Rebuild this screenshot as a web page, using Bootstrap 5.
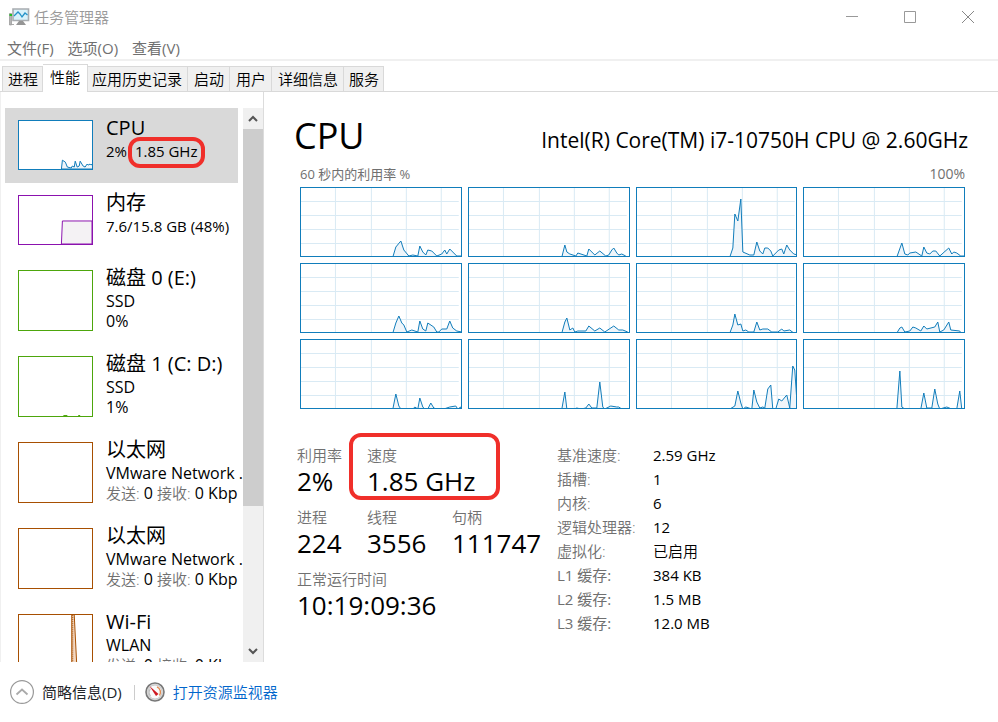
<!DOCTYPE html>
<html lang="zh-CN">
<head>
<meta charset="utf-8">
<meta name="viewport" content="width=device-width, initial-scale=1">
<title>任务管理器</title>
<link href="https://cdn.jsdelivr.net/npm/bootstrap@5.3.0/dist/css/bootstrap.min.css" rel="stylesheet">
<style>
  :root { --cpu: #117dbb; --mem: #8b12ae; --disk: #4da60c; --net: #a74f01; --dim: #707070; --mark: #f02f2a; }
  body { font-family: "Open Sans", "Noto Sans CJK SC", sans-serif; font-size: 15px; line-height: 20px; color: #000; background: #fff; }
  button { color: inherit; }
  .cjk { font-size: 15px; font-weight: 350; }
  .mix { font-size: 15px; font-weight: 400; }
  .dim { color: var(--dim); }
  .titlebar { height: 34px; padding: 0 1px 0 9px; color: #999; }
  .win-btn { width: 58px; height: 34px; }
  .menubar { height: 27px; padding: 3px 7px 0; gap: 14px; border-bottom: 2px solid #f0f0f0; }
  .tabstrip { height: 31px; padding-left: 2px; border-bottom: 1px solid #d9d9d9; }
  .tabstrip .nav-link { height: 25px; padding: 0 5px 1px 6px; border: 1px solid #d9d9d9; border-bottom: 0; border-left-width: 0; border-radius: 0; background: #f0f0f0; color: #000; line-height: 20px; white-space: nowrap; }
  .tabstrip li:first-child .nav-link { border-left-width: 1px; padding: 0 4px 1px 5px; }
  .tabstrip .nav-link.wide { padding: 0 5px 1px 4px; }
  .tabstrip .nav-link.active { height: 28px; padding: 0 7px 3px; margin-bottom: -1px; background: #fff; position: relative; }
  .tabstrip li:last-child .nav-link { padding: 0 4px 1px 5px; }
  .workspace { min-height: 0; border-left: 1px solid #f0f0f0; }
  .side { width: 263px; padding: 16px 0 0 4px; border-right: 1px solid #dcdcdc; }
  .side-list { width: 238px; overflow: hidden; }
  .perf { width: 233px; padding: 8px 0 0 13px; gap: 13px; height: 75px; border: 0; background: #fff; color: #000; white-space: nowrap; text-align: left; overflow: visible; }
  .perf.tall { height: 86px; font-size: 16px; }
  .perf.on { background: #d9d9d9; }
  .perf .thumb { width: 75px; height: 50px; margin-top: 4px; border: 1px solid currentColor; background: #fff; }
  .perf.tall .thumb { height: 61px; }
  .perf .name { font-size: 20px; line-height: 24px; }
  .perf .row-a { line-height: 22px; }
  .perf .row-b { line-height: 18px; }
  .perf .row-b .cjk { line-height: 14px; }
  .c-cpu { color: var(--cpu); } .c-mem { color: var(--mem); } .c-disk { color: var(--disk); } .c-net { color: var(--net); }
  .ring { position: absolute; border: 4px solid var(--mark); border-radius: 12px; pointer-events: none; }
  .ring-small { inset: -4px -8px -7px -7px; }
  .ring-large { inset: -12px -25px -3px -18px; }
  .scroller { width: 20px; background: #f0f0f0; }
  .scroller button { height: 21px; }
  .scroller .thumb-bar { height: 377px; background: #cdcdcd; }
  .detail { padding: 8px 33px 0 36px; }
  .detail h1 { font-size: 36px; line-height: 40px; font-weight: 400; margin: 0 0 0 -6px; }
  .detail .model { font-size: 21px; line-height: 30px; margin-right: -3px; }
  .axis { font-size: 13px; line-height: 20px; margin-bottom: 3px; }
  .axis .pct { font-size: 14px; }
  .cores { display: grid; grid-template-columns: repeat(4, 1fr); gap: 6px; }
  .cores svg { width: 100%; height: 70px; border: 1px solid var(--cpu); display: block; }
  .plot { fill: #eff5fa; stroke: var(--cpu); stroke-width: 1; vector-effect: non-scaling-stroke; }
  .gridline { stroke: #d9eaf4; stroke-width: 1; fill: none; shape-rendering: crispEdges; }
  .figures { margin: 36px 0 0 -3px; gap: 16px; }
  .facts { display: grid; grid-template-columns: 70px 85px 89px; row-gap: 10px; align-content: start; white-space: nowrap; }
  .facts .cjk { line-height: 20px; }
  .facts .big { font-size: 26px; line-height: 32px; }
  .specs { display: grid; grid-template-columns: 96px auto; grid-auto-rows: 24px; line-height: 20px; white-space: nowrap; }
  .bottom { height: 60px; padding-left: 10px; }
  .bottom a { color: #0066cc; }
  .vsep { width: 1px; height: 15px; background: #ccc; margin: 0 10px 0 12px; }
</style>
<script src="https://cdn.jsdelivr.net/npm/bootstrap@5.3.0/dist/js/bootstrap.bundle.min.js"></script>
</head>
<body>
<svg width="0" height="0" class="position-absolute" aria-hidden="true">
  <symbol id="grid" viewBox="0 0 160 68" preserveAspectRatio="none"><path class="gridline" d="M34.5 0V68M70.5 0V68M105.500 0V68M140.500 0V68M0 13.500H158M0 27.500H158M0 41.500H158M0 55.500H158"/></symbol>
</svg>
<div class="vh-100 d-flex flex-column overflow-hidden">
  <header class="titlebar d-flex align-items-center flex-shrink-0">
    <svg width="21" height="18" viewBox="0 0 21 18" aria-hidden="true">
      <path d="M.5 5.500h2v11.500h-2z" fill="#b5b5b5" stroke="#888" stroke-width=".6"/><path d="M.5 6h2.500v2H.5z" fill="#20c020"/>
      <path d="M4 1h15.500v11.500H4z" fill="#d8f2fb" stroke="#a8acb0" stroke-width="1.600"/>
      <path d="M5 8l2-2 2-2 2 2 2 3 3-4 2.500 2" fill="none" stroke="#2492c8" stroke-width="1.300"/>
      <path d="M10 13h4l3 4H7z" fill="#959595"/><path d="M3 16.500h2" stroke="#aaa"/>
    </svg>
    <span class="cjk ms-1">任务管理器</span>
    <div class="ms-auto d-flex">
      <button class="win-btn btn p-0 border-0 rounded-0 d-flex align-items-center justify-content-center" aria-label="最小化"><svg width="12" height="12"><path d="M0 5.500h12" stroke="#999"/></svg></button>
      <button class="win-btn btn p-0 border-0 rounded-0 d-flex align-items-center justify-content-center" aria-label="最大化"><svg width="12" height="12"><path d="M.5.5h11v11H.5z" fill="none" stroke="#999"/></svg></button>
      <button class="win-btn btn p-0 border-0 rounded-0 d-flex align-items-center justify-content-center" aria-label="关闭"><svg width="12" height="12"><path d="M0 0l12 12M12 0L0 12" stroke="#888"/></svg></button>
    </div>
  </header>
  <nav class="menubar d-flex align-items-center flex-shrink-0">
    <button class="btn p-0 border-0 mix lh-1 dim">文件(F)</button>
    <button class="btn p-0 border-0 mix lh-1 dim">选项(O)</button>
    <button class="btn p-0 border-0 mix lh-1 dim">查看(V)</button>
  </nav>
  <ul class="tabstrip nav flex-nowrap align-items-end flex-shrink-0 cjk" role="tablist">
    <li><button class="nav-link" role="tab">进程</button></li>
    <li><button class="nav-link active" role="tab" aria-selected="true">性能</button></li>
    <li><button class="nav-link wide" role="tab">应用历史记录</button></li>
    <li><button class="nav-link" role="tab">启动</button></li>
    <li><button class="nav-link" role="tab">用户</button></li>
    <li><button class="nav-link" role="tab">详细信息</button></li>
    <li><button class="nav-link" role="tab">服务</button></li>
  </ul>
  <main class="workspace d-flex flex-grow-1">
    <aside class="side d-flex flex-shrink-0">
      <div class="side-list">
        <button class="perf on d-flex">
          <svg class="thumb c-cpu flex-shrink-0" viewBox="0 0 74 49" preserveAspectRatio="none"><path class="plot" d="M43 49l1-9 3 2 2 5 4 1 1-2 2 1 1-6 2 6 2-1 1-5 3 5 2 1 2-3 1 1 2-1 1 1 2-2 1 1v5z"/></svg>
          <span><span class="name d-block">CPU</span><span class="row-a d-block">2% <span class="position-relative ms-1">1.85 GHz<span class="ring ring-small"></span></span></span></span>
        </button>
        <button class="perf d-flex">
          <svg class="thumb c-mem flex-shrink-0" viewBox="0 0 74 49" preserveAspectRatio="none"><path d="M43 49l1-23.500h30V49z" fill="#f4f2f4" stroke="#8b12ae"/></svg>
          <span><span class="name d-block">内存</span><span class="row-a d-block">7.6/15.8 GB (48%)</span></span>
        </button>
        <button class="perf tall d-flex">
          <svg class="thumb c-disk flex-shrink-0"></svg>
          <span><span class="name d-block">磁盘 0 (E:)</span><span class="row-a d-block">SSD</span><span class="row-b d-block">0%</span></span>
        </button>
        <button class="perf tall d-flex">
          <svg class="thumb c-disk flex-shrink-0" viewBox="0 0 74 60" preserveAspectRatio="none"><path d="M45 59.500h4M60 59.500h2" stroke="#4da60c"/></svg>
          <span><span class="name d-block">磁盘 1 (C: D:)</span><span class="row-a d-block">SSD</span><span class="row-b d-block">1%</span></span>
        </button>
        <button class="perf tall d-flex">
          <svg class="thumb c-net flex-shrink-0"></svg>
          <span><span class="name d-block">以太网</span><span class="row-a d-block">VMware Network .</span><span class="row-b d-block"><span class="cjk dim">发送:</span> 0 <span class="cjk dim">接收:</span> 0 Kbp</span></span>
        </button>
        <button class="perf tall d-flex">
          <svg class="thumb c-net flex-shrink-0"></svg>
          <span><span class="name d-block">以太网</span><span class="row-a d-block">VMware Network .</span><span class="row-b d-block"><span class="cjk dim">发送:</span> 0 <span class="cjk dim">接收:</span> 0 Kbp</span></span>
        </button>
        <button class="perf tall d-flex">
          <svg class="thumb c-net flex-shrink-0" viewBox="0 0 74 60" preserveAspectRatio="none"><path d="M53 60V0h3l3 60z" fill="#f3d9c4"/><path d="M53.500 0V60M56 0l3 60" stroke="#a74f01" fill="none"/><path d="M54.500 0V60" stroke="#a74f01" stroke-dasharray="1 1"/></svg>
          <span><span class="name d-block">Wi-Fi</span><span class="row-a d-block">WLAN</span><span class="row-b d-block"><span class="cjk dim">发送:</span> 0 <span class="cjk dim">接收:</span> 0 Kbp</span></span>
        </button>
      </div>
      <div class="scroller d-flex flex-column">
        <button class="btn p-0 border-0 d-flex align-items-center justify-content-center" aria-label="向上滚动"><svg width="10" height="7"><path d="M1 6l4-4 4 4" fill="none" stroke="#555" stroke-width="2"/></svg></button>
        <div class="thumb-bar"></div>
        <button class="btn p-0 border-0 mt-auto d-flex align-items-center justify-content-center" aria-label="向下滚动"><svg width="10" height="7"><path d="M1 1l4 4 4-4" fill="none" stroke="#555" stroke-width="2"/></svg></button>
      </div>
    </aside>
    <section class="detail flex-grow-1">
      <div class="d-flex justify-content-between align-items-center pt-3">
        <h1>CPU</h1>
        <div class="model pt-2">Intel(R) Core(TM) i7-10750H CPU @ 2.60GHz</div>
      </div>
      <div class="axis dim d-flex justify-content-between pt-2"><span>60 秒内的利用率 %</span><span class="pct">100%</span></div>
      <div class="cores">
        <svg viewBox="0 0 160 68" preserveAspectRatio="none"><use href="#grid"/><path class="plot" d="M92 69L95 59 100 53 103 62 108 68 112 67 117 68 119 58 122 64 125 67 127 62 131 63 136 68 141 66 144 62 146 66 149 61 153 65 156 68 161 68V70H92z"/></svg>
        <svg viewBox="0 0 160 68" preserveAspectRatio="none"><use href="#grid"/><path class="plot" d="M93 69L96 57 98 64 101 66 107 68 109 65 118 68 120 61 126 67 131 63 137 68 140 67 143 62 145 60 148 65 150 67 153 66 157 68V70H93z"/></svg>
        <svg viewBox="0 0 160 68" preserveAspectRatio="none"><use href="#grid"/><path class="plot" d="M93 69L96 60 98 26 101 33 104 11 106 64 113 67 117 67 120 54 123 63 126 66 128 60 131 60 134 63 136 68 142 62 145 61 147 66 150 57 153 62 157 66 161 67V70H93z"/></svg>
        <svg viewBox="0 0 160 68" preserveAspectRatio="none"><use href="#grid"/><path class="plot" d="M93 69L98 55 101 66 104 67 106 65 112 64 118 68 120 59 123 65 126 66 129 63 132 63 136 68 145 60 148 66 150 64 153 65 157 68 161 68V70H93z"/></svg>
        <svg viewBox="0 0 160 68" preserveAspectRatio="none"><use href="#grid"/><path class="plot" d="M92 69L95 59 98 52 101 59 103 61 106 68 111 66 117 68 119 57 122 65 125 67 127 59 133 63 136 68 138 68 141 65 146 65 149 57 152 64 156 67 161 68V70H92z"/></svg>
        <svg viewBox="0 0 160 68" preserveAspectRatio="none"><use href="#grid"/><path class="plot" d="M93 69L96 58 98 54 101 66 104 64 106 68 109 67 117 67 120 62 126 67 131 64 136 68 145 62 150 66 154 66 159 68V70H93z"/></svg>
        <svg viewBox="0 0 160 68" preserveAspectRatio="none"><use href="#grid"/><path class="plot" d="M93 69L96 61 98 50 101 61 104 60 106 67 109 66 112 68 117 68 120 58 123 66 126 65 131 65 135 68 141 68 145 65 147 67 153 66 157 69V70H93z"/></svg>
        <svg viewBox="0 0 160 68" preserveAspectRatio="none"><use href="#grid"/><path class="plot" d="M93 69L96 64 98 63 101 68 106 67 109 63 112 64 117 67 120 62 123 65 131 63 134 58 136 68 140 66 145 58 147 66 156 67 157 69V70H93z"/></svg>
        <svg viewBox="0 0 160 68" preserveAspectRatio="none"><use href="#grid"/><path class="plot" d="M92 69L95 54 98 66 100 69 112 69 114 67 117 69 119 58 122 67 124 69 127 69 130 63 133 68 136 69 143 69 149 67 155 66 157 69 160 67V70H92z"/></svg>
        <svg viewBox="0 0 160 68" preserveAspectRatio="none"><use href="#grid"/><path class="plot" d="M93 69L96 52 98 69 105 69 108 68 112 69 117 68 120 64 123 68 128 68 131 42 134 67 136 69 142 66 148 67 150 67 153 69 160 69V70H93z"/></svg>
        <svg viewBox="0 0 160 68" preserveAspectRatio="none"><use href="#grid"/><path class="plot" d="M93 69L98 66 101 51 104 63 106 69 109 67 115 69 117 50 120 62 123 68 126 67 128 68 131 49 134 45 136 69 139 69 142 59 145 61 150 55 153 68 156 26 158 30 160 59V70H93z"/></svg>
        <svg viewBox="0 0 160 68" preserveAspectRatio="none"><use href="#grid"/><path class="plot" d="M93 69L96 31 98 67 101 69 117 69 120 53 123 68 128 68 131 49 134 64 136 69 143 67 148 69 153 69 156 51 158 69V70H93z"/></svg>
      </div>
      <div class="figures d-flex">
        <div class="facts">
          <div><div class="cjk dim">利用率</div><div class="big">2%</div></div>
          <div style="grid-column: span 2"><div class="position-relative d-inline-block align-top"><div class="cjk dim">速度</div><div class="big">1.85 GHz</div><span class="ring ring-large"></span></div></div>
          <div><div class="cjk dim">进程</div><div class="big">224</div></div>
          <div><div class="cjk dim">线程</div><div class="big">3556</div></div>
          <div><div class="cjk dim">句柄</div><div class="big">111747</div></div>
          <div style="grid-column: span 3"><div class="cjk dim">正常运行时间</div><div class="big">10:19:09:36</div></div>
        </div>
        <dl class="specs mb-0">
          <dt class="cjk dim">基准速度:</dt><dd>2.59 GHz</dd>
          <dt class="cjk dim">插槽:</dt><dd>1</dd>
          <dt class="cjk dim">内核:</dt><dd>6</dd>
          <dt class="cjk dim">逻辑处理器:</dt><dd>12</dd>
          <dt class="cjk dim">虚拟化:</dt><dd class="cjk">已启用</dd>
          <dt class="mix dim">L1 缓存:</dt><dd>384 KB</dd>
          <dt class="mix dim">L2 缓存:</dt><dd>1.5 MB</dd>
          <dt class="mix dim">L3 缓存:</dt><dd>12.0 MB</dd>
        </dl>
      </div>
    </section>
  </main>
  <footer class="bottom d-flex align-items-center flex-shrink-0 cjk">
    <button class="btn p-0 border-0 mix d-flex align-items-center gap-2">
      <svg width="24" height="24" viewBox="0 0 24 24" aria-hidden="true"><circle cx="12" cy="12" r="11.400" fill="#fff" stroke="#999" stroke-width="1.200"/><path d="M6.500 14.500L12 9.500l5.500 5" fill="none" stroke="#aaa" stroke-width="1.800"/></svg>
      <span>简略信息(D)</span>
    </button>
    <span class="vsep"></span>
    <a href="#" class="d-flex align-items-center text-decoration-none">
      <svg class="me-2" width="20" height="20" viewBox="0 0 20 20" aria-hidden="true"><circle cx="10" cy="10" r="9" fill="#e0e0e0" stroke="#777" stroke-width="1.600"/><circle cx="10" cy="10" r="7" fill="#fafafa" stroke="#bbb" stroke-width=".8"/><path d="M5.500 14a6 6 0 0 1 0-7.500" fill="none" stroke="#bbb" stroke-width="1.200"/><path d="M12 4.800a6 6 0 0 1 2.500 8.700" fill="none" stroke="#e08a50" stroke-width="1.400"/><path d="M4.500 4l9 8-2.500 2z" fill="#d01820"/></svg>
      <span>打开资源监视器</span>
    </a>
  </footer>
</div>
</body>
</html>
